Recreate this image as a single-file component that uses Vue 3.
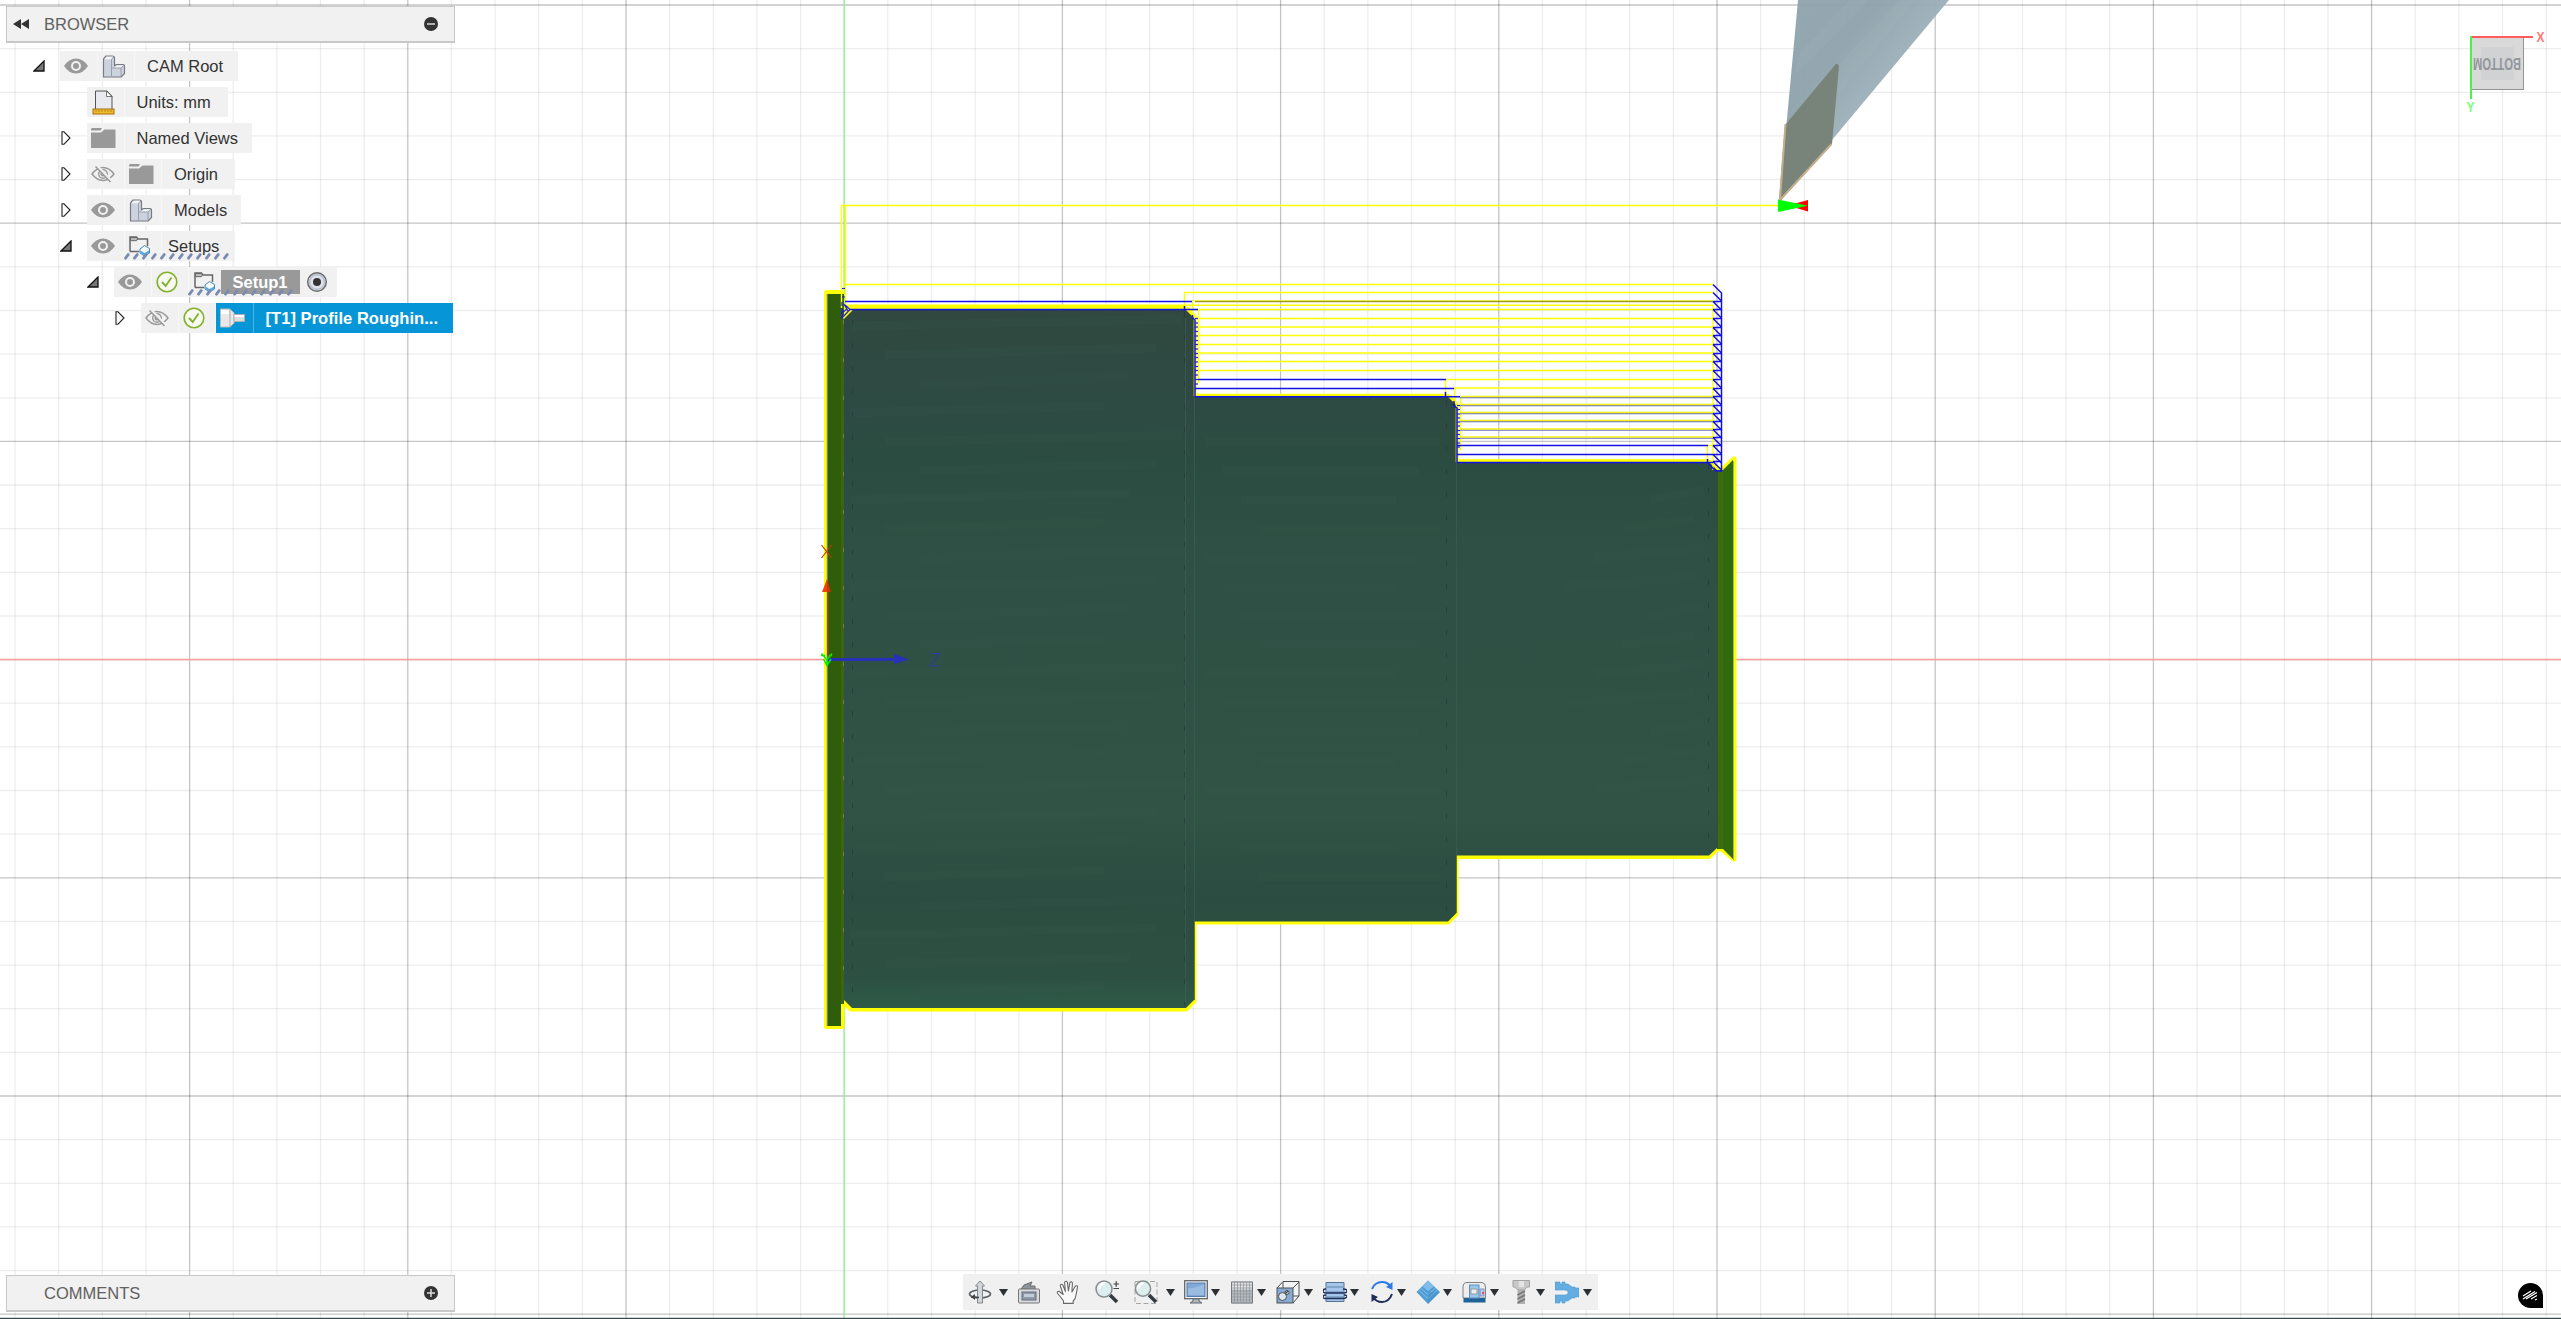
<script setup>
const ORIGIN = { x: 844.2, y: 659.6 }
const STEP = 43.64

const lines = (origin, limit) => {
  const out = []
  for (let k = -40; k <= 45; k++) {
    const pos = Math.round((origin + k * STEP) * 10) / 10
    if (pos > 0 && pos < limit) out.push({ pos, major: k % 5 === 0 })
  }
  return out
}
const verticals = lines(ORIGIN.x, 2561)
const horizontals = lines(ORIGIN.y, 1319)

// roughing passes above each diameter
const passes = [318.5, 327, 335.5, 344.5, 353, 361.5, 370.5]
const finePasses = [397, 405, 413, 421, 429.5, 437.5]
const teeth = [292.5, 301.5, 309.5, 318.5, 327.5, 335.5, 344.5, 353.5, 361.5, 370.5, 379.5, 388.5, 396.5, 405.5, 413.5, 421.5, 429.5, 437.5, 445.5, 454.5, 461.5]
const range = (start, end, step) => {
  const out = []
  for (let v = start; v <= end; v += step) out.push(Math.round(v * 2) / 2)
  return out
}
const ticksA = range(318.5, 384, 4.35)
const ticksB = range(405.5, 450, 4.15)
const streaks = range(326, 1000, 29)

const rows = [
  { indent: 60, arrow: 'open', cells: ['eye', 'body'], label: 'CAM Root', text: 12, width: 178 },
  { indent: 87, arrow: '', cells: ['units'], label: 'Units: mm', text: 12, width: 141 },
  { indent: 87, arrow: 'closed', cells: ['folder'], label: 'Named Views', text: 12, width: 165 },
  { indent: 87, arrow: 'closed', cells: ['hidden', 'folder'], label: 'Origin', text: 12, width: 148 },
  { indent: 87, arrow: 'closed', cells: ['eye', 'body'], label: 'Models', text: 12, width: 154 },
  { indent: 87, arrow: 'open', cells: ['eye', 'setup'], label: 'Setups', text: 6, width: 148, hatch: 37 },
  { indent: 114, arrow: 'open', cells: ['eye', 'check', 'setup'], label: 'Setup1', text: 0, width: 223, hatch: 74, kind: 'active' },
  { indent: 141, arrow: 'closed', cells: ['hidden', 'check', 'turning'], label: '[T1] Profile Roughin', text: 12, width: 312, kind: 'selected' },
]

// gap = space before the icon, caretGap = space between icon and caret
const tools = [
  { icon: 'orbit', gap: 5, caretGap: 7 },
  { icon: 'look', gap: 9 },
  { icon: 'hand', gap: 15 },
  { icon: 'zoom', gap: 15 },
  { icon: 'window', gap: 15, caretGap: 8 },
  { icon: 'display', gap: 9, caretGap: 3 },
  { icon: 'grid', gap: 10, caretGap: 3 },
  { icon: 'views', gap: 10, caretGap: 4 },
  { icon: 'section', gap: 10, caretGap: 3 },
  { icon: 'refresh', gap: 11, caretGap: 3 },
  { icon: 'stock', gap: 10, caretGap: 3 },
  { icon: 'machine', gap: 10, caretGap: 4 },
  { icon: 'tool', gap: 10, caretGap: 3 },
  { icon: 'fixture', gap: 10, caretGap: 4 },
]
</script>

<template>
  <div class="app">
    <svg class="viewport" width="2561" height="1319" viewBox="0 0 2561 1319">
      <defs>
        <linearGradient id="steel" gradientUnits="userSpaceOnUse" x1="0" y1="309" x2="0" y2="1009">
          <stop offset="0" stop-color="#30483f" />
          <stop offset="0.1" stop-color="#2e4a43" />
          <stop offset="0.22" stop-color="#2b4c41" />
          <stop offset="0.35" stop-color="#2f5044" />
          <stop offset="0.72" stop-color="#305346" />
          <stop offset="0.84" stop-color="#2b4d41" />
          <stop offset="0.95" stop-color="#2c5042" />
          <stop offset="1" stop-color="#2e5a47" />
        </linearGradient>
        <linearGradient id="holder" x1="0" y1="0" x2="1" y2="1">
          <stop offset="0" stop-color="#90a5b0" />
          <stop offset="0.3" stop-color="#8fa3ac" />
          <stop offset="0.5" stop-color="#9db0b9" />
          <stop offset="1" stop-color="#93a8b1" />
        </linearGradient>
      </defs>

      <rect width="2561" height="1319" fill="#fff" />
      <g class="grid">
        <line v-for="l in verticals" :key="'v' + l.pos" :x1="l.pos" :x2="l.pos" y1="0" y2="1319" :class="{ major: l.major }" />
        <line v-for="l in horizontals" :key="'h' + l.pos" :y1="l.pos" :y2="l.pos" x1="0" x2="2561" :class="{ major: l.major }" />
      </g>
      <line x1="0" x2="2561" y1="659.5" y2="659.5" stroke="#ff9c9c" stroke-width="1.3" />
      <line x1="844.3" x2="844.3" y1="0" y2="1319" stroke="#98f898" stroke-width="1.3" />

      <!-- turned part -->
      <path d="M826.5 292.5H841V309H1187L1194 317V397H1449L1456 405V462H1709L1717 470H1722L1734 459V859L1722 849H1717L1709 856.5H1456V914L1448 922H1194V1001L1186 1009H851L842 1001V1026.5H826.5Z" fill="#ff0" stroke="#ff0" stroke-width="5" stroke-linejoin="round" />
      <rect x="827" y="294" width="14" height="732" fill="#2f5d0a" />
      <rect x="841" y="294" width="3" height="710" fill="#3d6415" />
      <line x1="827" x2="827" y1="294" y2="1026" stroke="#b3b886" />
      <path d="M844 317L852 309H1187L1194.5 317V397H1449L1456.5 405V462H1709L1717 470V848L1709 855.5H1456V913.5L1448 921.5H1194V1000L1186 1008H852L844 1000Z" fill="url(#steel)" />
      <g stroke="#3a5c4f" stroke-width="9" opacity=".16">
        <path v-for="(y, i) in streaks" :key="y" :d="`M${850 + (i % 3) * 35} ${y}L${1182 - (i % 4) * 26} ${y - 7}`" />
        <path v-for="(y, i) in streaks.slice(4, 20)" :key="'m' + y" :d="`M${1205 + (i % 4) * 18} ${y}H${1440 - (i % 3) * 22}`" />
        <path v-for="(y, i) in streaks.slice(6, 17)" :key="'r' + y" :d="`M${1650 - (i % 4) * 28} ${y}L${1704 - (i % 2) * 10} ${y - 10}`" />
      </g>
      <path d="M1717 470H1723V849H1717Z" fill="#3e6b0d" />
      <path d="M1723 470L1733 460V859L1723 849Z" fill="#2f6a0c" />
      <line x1="1717.5" x2="1717.5" y1="472" y2="848" stroke="#344f2b" />
      <line x1="1733.5" x2="1733.5" y1="461" y2="860" stroke="#a8b35b" />
      <g fill="none" stroke="#3e5a53">
        <path d="M1185.5 318V1002M1194.5 318V1000M1456.5 406V913" opacity=".8" />
        <path d="M1184.5 312V1006M1446.5 400V918M1708.5 465V854M852.5 320V1000" stroke="#2b3540" stroke-dasharray="5 18" opacity=".7" />
        <path d="M843.5 320V1000" stroke="#6b7b42" stroke-dasharray="4 34" />
      </g>

      <!-- linking moves and cutting passes -->
      <g fill="none" stroke="#ff0" stroke-width="1.4">
        <path d="M841.5 308V205.5H1780M845.5 205.5V308M845 284.5H1713M1184.5 308V292.5H1713M1192.5 311V301M845 305.3H1713V470M1192 309.5H1713M1198.5 309V383M1445.5 396V379.5H1713M1454.5 403V388H1713M1460.5 397V450M1707.5 461V445.5H1713" />
        <path v-for="y in passes" :key="y" :d="`M1198 ${y}H1713`" />
      </g>
      <g fill="none" stroke="#ff0" stroke-width="2.6">
        <path d="M845 307.4H1185L1195 317V395H1448L1457 404V460.6H1708" />
        <path d="M843 318L852 309" />
      </g>
      <path d="M1195 301.5H1713" stroke="#a0a00c" stroke-width="1.6" />
      <path d="M1192 300.5H1713" stroke="#e8e820" stroke-width=".7" />
      <g v-for="y in finePasses" :key="'f' + y" fill="none">
        <path :d="`M1460 ${y + 0.6}H1713`" stroke="#6e6ec4" stroke-width="1.2" />
        <path :d="`M1460 ${y - 0.5}H1713`" stroke="#f3f315" stroke-width="1.3" />
      </g>
      <g fill="none" stroke="#1212e6" stroke-width="1.5">
        <path d="M845 301.5H1192M850 309.5H1198M1198 379.5H1446M1195 388.4H1454M1195 396.7H1460M1457 445.6H1708M1457 454.4H1713M1457 462.5H1713" />
        <path d="M1184.5 306V311M1192.5 315V318L1195 320V397M1445.5 392V397M1454 401V406L1457 408V462M1707.5 459V463L1716 471H1721.5V293L1713 284.5" />
        <path v-for="y in teeth" :key="'t' + y" :d="`M1713 ${y}L1721.5 ${y + 8.5}${y > 295 ? `M1713 ${y}H1721.5` : ''}`" />
      </g>
      <g fill="none" stroke="#1818ee" stroke-width="1.2">
        <path v-for="y in ticksA" :key="'a' + y" :d="`M1195 ${y}H1198`" />
        <path v-for="y in ticksB" :key="'b' + y" :d="`M1457 ${y}H1460`" />
        <path d="M842 288.5H845M842 297H845M842 302V306M842 308V318L850 309.5L845 305M842 313L847 309M844 304L848 311" />
      </g>

      <!-- work coordinate triad -->
      <path d="M828 592V656" stroke="#8a4a08" stroke-width="1.6" />
      <path d="M822 592L827 579V592Z" fill="#f4420a" />
      <path d="M827 579L831 592H827Z" fill="#c43a05" />
      <path d="M821.5 545L831.5 558M831.5 545L821.5 558" stroke="#c83a08" stroke-width="1.2" />
      <path d="M827 658H894V654L909 659.5L894 664V661H827Z" fill="#2830b8" />
      <path d="M930 653.5H939.5L930 666H940" fill="none" stroke="#2a3e9c" stroke-width="1.2" />
      <path d="M821.5 653.5L827 660L832 653.5M827 659V665M821 655.5H825M829 655.5H832M823.5 659L827 665.5L831 659" fill="none" stroke="#08ea08" stroke-width="1.5" />

      <!-- lathe tool -->
      <path d="M1798 0H1949L1832 140L1781 200H1779.5Z" fill="url(#holder)" fill-opacity=".96" />
      <path d="M1798 55L1850 0H1869L1795 75ZM1838 66L1900 0H1915L1838 95Z" fill="#a6b6bb" opacity=".18" />
      <path d="M1785 125L1835 65Q1837 62 1839 66L1832 144L1781 200H1779Z" fill="#78847a" />
      <path d="M1785.5 124L1780 200L1831.5 144" fill="none" stroke="#c4ad8a" stroke-width="2" />
      <path d="M1808 200V211.5L1788 205.5Z" fill="#f00" />
      <path d="M1778 199.5V212L1808 205.8Z" fill="#0f0" />

      <!-- view cube -->
      <rect x="2471.5" y="37.5" width="52" height="52" fill="#d9d9d9" stroke="#929292" />
      <rect x="2481" y="47" width="33" height="33" fill="#d0d2d4" />
      <text class="cube" x="-2521" y="-57.5" textLength="48" lengthAdjust="spacingAndGlyphs" transform="rotate(180)">BOTTOM</text>
      <path d="M2471 37H2533" stroke="#ff5c5c" stroke-width="2" />
      <path d="M2471 36V99" stroke="#4cf24c" stroke-width="2" />
      <text class="axis" x="2536.5" y="42" textLength="8" lengthAdjust="spacingAndGlyphs" fill="#ff7878">X</text>
      <text class="axis" x="2466.5" y="112" textLength="8" lengthAdjust="spacingAndGlyphs" fill="#78ff78">Y</text>

      <rect x="0" y="1317.8" width="2561" height="1.2" fill="#33474c" />
    </svg>

    <div class="overlay">
      <section class="browser">
        <header class="bar">
          <svg class="rewind" width="17" height="12" viewBox="0 0 17 12"><path d="M8 1V11L0 6ZM16 1V11L8 6Z" fill="#333" /></svg>
          <span class="title">BROWSER</span>
          <svg width="14" height="14" viewBox="0 0 14 14"><circle cx="7" cy="7" r="7" fill="#333" /><path d="M3 7H11" stroke="#ddd" stroke-width="1.5" /></svg>
        </header>

        <ul class="tree">
          <li v-for="row in rows" :key="row.label" class="row">
            <span class="lead" :style="{ width: row.indent + 'px' }">
              <svg v-if="row.arrow === 'open'" class="arrow" width="12" height="12" viewBox="0 0 12 12"><path d="M11 1V11H1Z" fill="#777" stroke="#111" stroke-width="1.3" /></svg>
              <svg v-else-if="row.arrow" class="arrow closed" width="10" height="14" viewBox="0 0 10 14"><path d="M1 .8H3L9 7L3 13.2H1Z" fill="#fff" stroke="#222" stroke-width="1.1" /></svg>
            </span>
            <div class="node" :class="row.kind" :style="{ width: row.width + 'px' }">
              <span v-for="cell in row.cells" :key="cell" class="cell" :class="cell">
                <svg v-if="cell === 'eye'" width="24" height="16" viewBox="0 0 24 16"><path d="M0 8Q5 .5 12 .5T24 8Q19 15.5 12 15.5T0 8Z" fill="#999" /><circle cx="12" cy="8" r="4" fill="#999" stroke="#f1f1f1" stroke-width="2" /></svg>
                <svg v-else-if="cell === 'hidden'" width="24" height="18" viewBox="0 0 24 18" fill="none" stroke="#999" stroke-width="1.4"><path d="M1 9Q6 2.5 12 2.5T23 9Q18 15.5 12 15.5T1 9Z" /><circle cx="12" cy="9" r="4.3" /><circle cx="12" cy="9" r="1.8" /><path d="M6 .5L21.5 17" stroke="#f1f1f1" stroke-width="2.4" /><path d="M4.5 1.5L19.5 17" /></svg>
                <svg v-else-if="cell === 'body'" width="24" height="23" viewBox="0 0 24 23"><path d="M1.5 4L4 1H10.5Q12.5 1 12.5 3V11L14.5 9.5H21Q22.5 9.5 22.5 11V18.5L19 22H1.5Z" fill="#cdd3de" stroke="#777b82" stroke-width="1.2" stroke-linejoin="round" /><path d="M2.2 4.3L4.5 1.8H11L9.2 4.3ZM11.5 12.8L14.5 10.6H21.2L19 12.8Z" fill="#f3f5f8" /><path d="M9.5 4.5V21M9.5 4.5L12 1.8M10 13H19V21M19 13L22 10.3" fill="none" stroke="#8d939e" stroke-width=".8" /></svg>
                <svg v-else-if="cell === 'units'" width="23" height="25" viewBox="0 0 23 25"><path d="M3.5 1H15L20 6V20H3.5Z" fill="#e8eaf0" stroke="#555" /><path d="M14.5 1V6.5H20Z" fill="#fff" stroke="#555" stroke-width=".8" /><rect x="1" y="19" width="21" height="5" fill="#eebb2b" stroke="#a86c10" /><path d="M4 20V22M7 20V22M10 20V22M13 20V22M16 20V22M19 20V22" stroke="#8a6518" stroke-width=".6" /></svg>
                <svg v-else-if="cell === 'folder'" width="25" height="20" viewBox="0 0 25 20"><path d="M0 4.5H10L13.5 1.5H24.5V20H0Z" fill="#999" /><path d="M1 0H11L9.5 2.6H0V1Z" fill="#999" /></svg>
                <svg v-else-if="cell === 'setup'" width="22" height="20" viewBox="0 0 22 20"><path d="M1 15.5V1H7.5L9 3H18.5V10M1 15.5H10" fill="#f1f1f1" stroke="#666" stroke-width="1.5" /><path d="M1.5 1.5H7.5L8.5 3L7.5 4.7H1.5Z" fill="#bbb" stroke="#666" /><path d="M11 13L15.5 9.5L20.5 12.5V17L15.5 20L11 17Z" fill="#f7fbff" stroke="#4285b7" /><path d="M11.5 14.5L15.5 17L20 14.5V17L15.5 19.5L11.5 17Z" fill="#54a9de" /></svg>
                <svg v-else-if="cell === 'check'" width="22" height="22" viewBox="0 0 22 22" fill="none"><circle cx="11" cy="11" r="9.8" fill="#f7faf1" stroke="#85b12f" stroke-width="1.6" /><path d="M6 11L9.7 15L15.5 6.5" stroke="#85b12f" stroke-width="1.9" /></svg>
                <svg v-else width="26" height="20" viewBox="0 0 26 20"><path d="M.5 1H10L14 5V15L10 19H.5Z" fill="#e8e8e8" stroke="#bcbcbc" /><path d="M10 1V19" stroke="#aaa" /><path d="M14 6.5H24.5V13.5H14Z" fill="#dedede" stroke="#b0b0b0" /><path d="M1 2H9V6H1ZM14.5 7H24V9H14.5Z" fill="#fff" /></svg>
              </span>
              <span class="label" :style="{ marginLeft: row.text + 'px' }">{{ row.label }}<i v-if="row.kind === 'selected'">...</i></span>
              <svg v-if="row.kind === 'active'" class="radio" width="22" height="22" viewBox="0 0 22 22"><circle cx="11" cy="11" r="9.3" fill="#dfe2eb" stroke="#6b6b6b" stroke-width="1.5" /><circle cx="11" cy="11" r="7.3" fill="none" stroke="#b8bfd0" stroke-width="1.4" /><circle cx="11" cy="11" r="4" fill="#333" /></svg>
              <svg v-if="row.hatch" class="hatch" width="106" height="7" viewBox="0 0 106 7" :style="{ left: row.hatch + 'px' }"><path v-for="n in 12" :key="n" :d="`M${(n - 1) * 9 + 1.5} 5.2L${(n - 1) * 9 + 4.2} 1.6`" stroke="#7b8bb0" stroke-width="2.8" stroke-linecap="round" /></svg>
            </div>
          </li>
        </ul>
      </section>

      <footer class="bottom">
        <div class="bar comments">
          <span class="title">COMMENTS</span>
          <svg width="14" height="14" viewBox="0 0 14 14"><circle cx="7" cy="7" r="7" fill="#333" /><path d="M3 7H11M7 3V11" stroke="#ddd" stroke-width="1.5" /></svg>
        </div>

        <nav class="toolbar">
          <template v-for="t in tools" :key="t.icon">
            <svg class="tool" width="24" height="24" viewBox="0 0 24 24" :style="{ marginLeft: t.gap + 'px' }">
              <g v-if="t.icon === 'orbit'" stroke="#5a6068"><ellipse cx="12" cy="14" rx="10.5" ry="4" fill="none" stroke-width="1.6" /><path d="M9.5 23V6H7.5L12 1L16.5 6H14.5V23Z" fill="#d3d7dc" stroke="#82878d" stroke-width="1" /><path d="M3 17L11 17.5" stroke="#444" stroke-width="1.5" /><path d="M7 14L3 17L7 20Z" fill="#444" stroke="none" /></g>
              <g v-else-if="t.icon === 'look'"><path d="M4 9L7 5L15 2L13 6H18V9.5Z" fill="#8d949b" stroke="#666b70" /><rect x="1.5" y="9" width="21" height="14" rx="1" fill="#d8dbde" stroke="#777" /><rect x="5" y="12" width="14" height="8" fill="#8f99a8" stroke="#656c76" /><path d="M7 14H17V17H7Z" fill="#c4ccd7" /></g>
              <path v-else-if="t.icon === 'hand'" d="M7.5 23.4V21L5 17.5L1.3 13Q1 11 3 11.3L7.2 14.5L4.2 5.5Q5 3.4 6.8 5L9.4 11.5L8.6 2.3Q10 .3 11.4 2.3L12.4 11L13.9 2.3Q15.5 .8 16.4 3L15.9 12L19.4 6Q21.6 5 21.5 7.2L20 15Q19.5 19 17.2 21V23.4Z" fill="#fafafa" stroke="#686868" stroke-width="1.1" stroke-linejoin="round" />
              <g v-else-if="t.icon === 'zoom'"><path d="M15 15L22 22" stroke="#333b40" stroke-width="3.6" /><circle cx="9" cy="9" r="8" fill="#dceeed" stroke="#868e90" stroke-width="1.5" /><path d="M4 9Q5 4 10 3" fill="none" stroke="#fff" stroke-width="2.4" /><path d="M18.5 4H24M21.2 1.2V6.8M18.5 8.5H24" stroke="#444" stroke-width="1.2" /></g>
              <g v-else-if="t.icon === 'window'"><rect x="1" y="1.5" width="22" height="22" fill="none" stroke="#a6a6a6" stroke-dasharray="5 2.5" /><path d="M15 15L22 22" stroke="#333b40" stroke-width="3.6" /><circle cx="9" cy="8.7" r="7.6" fill="#dceeed" stroke="#868e90" stroke-width="1.5" /><path d="M4 8.5Q5 4 9.5 3" fill="none" stroke="#fff" stroke-width="2.4" /></g>
              <g v-else-if="t.icon === 'display'" stroke="#63676c"><path d="M9 18H15V21L18 23H6L9 21Z" fill="#aeb4b9" /><rect x=".7" y=".7" width="22.6" height="18" fill="#f5f5f5" stroke-width="1.3" /><rect x="3" y="3" width="18" height="13.5" fill="#82a9d5" stroke="#557da9" /><path d="M4 15V8Q10 9 20 4V15Z" fill="#99bce1" stroke="none" /></g>
              <g v-else-if="t.icon === 'grid'"><rect x="1" y="1.5" width="22" height="22" fill="#b8bcc1" /><rect x="1" y="1.5" width="22" height="8" fill="#e0e2e4" /><path d="M1.5 2H22.5V23H1.5Z" fill="none" stroke="#73797f" /><path d="M4.5 2V23M7.5 2V23M10.5 2V23M13.5 2V23M16.5 2V23M19.5 2V23M2 5H22M2 8H22M2 11H22M2 14H22M2 17H22M2 20H22" fill="none" stroke="#8b9298" stroke-width=".7" /></g>
              <g v-else-if="t.icon === 'views'" stroke="#4c5055"><path d="M1 8L7 1.5H23V16L17 23" fill="#f3f3f3" /><path d="M7 2V8M17 8L23 2M17 16H23" fill="none" /><rect x="1" y="8" width="16" height="15" fill="#86aad3" /><circle cx="6.5" cy="16.5" r="4" fill="#dce4ec" /><circle cx="11" cy="12.5" r="2" fill="#dce4ec" /><path d="M9 14L12 11" stroke-width="1.5" /></g>
              <g v-else-if="t.icon === 'section'"><path d="M3 2.5H21V21.5H3Z" fill="#a4c6ec" stroke="#59738f" /><path d="M4 7H20M4 12H20M4 17H20" stroke="#6384a7" /><path d="M3 9Q0 9 0 11T4 13H20Q24 13 24 11T20 9M3 15Q0 15 0 17T5 18.5H20Q24 18 24 16.5T21 15" fill="none" stroke="#202e5a" stroke-width="1.5" /></g>
              <g v-else-if="t.icon === 'refresh'" fill="none" stroke-width="2"><path d="M2 9Q5 2 12 2Q18 2 21 7" stroke="#2e7ae4" /><path d="M22.5 2V10L16 7Z" fill="#2e7ae4" stroke="none" /><path d="M22 14Q19 22 12 22Q6 22 3 17" stroke="#1e2d59" /><path d="M1.5 14V22L8 17Z" fill="#1e2d59" stroke="none" /></g>
              <g v-else-if="t.icon === 'stock'"><path d="M12 .5L24 12L12 24L.5 12Z" fill="#4f9ed5" /><path d="M12 .5L18 6.5L12 11L6.5 6.5Z" fill="#80bcea" /><path d="M5 8.5L12 14.5L19 8.5M3 10.5L12 18.5L21 10.5" fill="none" stroke="#81bce5" /><path d="M12 12L24 12L12 24Z" fill="#3d85bd" opacity=".3" /></g>
              <g v-else-if="t.icon === 'machine'"><path d="M1 18V7Q1 2.5 5 2.5H20Q23.5 3 23.5 7V18Z" fill="#eee" stroke="#808080" /><rect x="1.5" y="18" width="22" height="4.5" fill="#1f6298" /><rect x="7.5" y="5" width="9.5" height="13" fill="#9bc7ed" stroke="#5a91bd" /><rect x="9" y="9" width="6" height="5" fill="#eee" stroke="#999" /><rect x="18" y="9" width="4" height="7" fill="#b9cbea" stroke="#6486bf" stroke-width=".8" /><path d="M20 13H22" stroke="#f45" stroke-width="2" /></g>
              <g v-else-if="t.icon === 'tool'"><path d="M4 .5H20.5V7H18L16 9.5H8L6 7H4Z" fill="#c8c8c8" stroke="#a3a3a3" /><path d="M8.5 9H16V24H8.5Z" fill="#b0b0b0" /><path d="M8.5 15L16 11M8.5 19L16 15M8.5 23L16 19" stroke="#787878" stroke-width="1.5" /><path d="M10 1H15V7H10Z" fill="#e4e4e4" /></g>
              <path v-else d="M0 2H5V4H7V2H10V4H13L17 7H20V8H24V17H20V18H17L13 21H10V23H7V21H5V23H0V15H10Q13 15 13 12.5T10 10H0Z" fill="#63ade2" stroke="#4c9bd2" stroke-width=".6" />
            </svg>
            <svg v-if="t.caretGap" class="caret" width="9" height="7" viewBox="0 0 9 7" :style="{ marginLeft: t.caretGap + 'px' }"><path d="M0 0H9L4.5 7Z" fill="#2c3033" /></svg>
          </template>
        </nav>

        <svg class="brand" width="25" height="25" viewBox="0 0 25 25"><path d="M12.5 0A12.5 12.5 0 0 1 25 12.5V25H12.5A12.5 12.5 0 0 1 12.5 0Z" fill="#000" /><path d="M5 13L13 8M5 16L17 8.5M8 16L19 9.5M13 16L19 12.5M17 17L19 16" stroke="#fff" stroke-width="1.3" /></svg>
      </footer>
    </div>
  </div>
</template>

<style>
body { background: #fff; }
</style>

<style scoped>
.app { position: relative; width: 2561px; height: 1319px; overflow: hidden; font-family: "Liberation Sans", Arial, sans-serif; font-size: 16.5px; color: #333; }
.viewport { position: absolute; inset: 0; }
.grid line { stroke: #000; stroke-opacity: .07; stroke-width: 1.3; }
.grid .major { stroke-opacity: .23; }
.cube { font-family: "Liberation Sans", sans-serif; font-size: 16.5px; font-weight: bold; fill: #92969a; }
.axis { font-family: "Liberation Sans", sans-serif; font-size: 14.5px; font-weight: bold; }
.overlay { position: relative; height: 1319px; box-sizing: border-box; display: flex; flex-direction: column; justify-content: space-between; padding: 6px 18px 9px 6px; }
svg { flex: none; }
.bar { width: 449px; height: 37px; box-sizing: border-box; display: flex; align-items: center; border: 1px solid #c8c8c8; border-bottom-width: 2px; background: #f1f1f1; padding: 0 16px 0 6px; }
.title { flex: 1; margin-left: 14px; color: #606060; line-height: 34px; }
.comments .title { margin-left: 31px; }
.tree { list-style: none; margin: 8px 0 0 -6px; padding: 0; display: flex; flex-direction: column; gap: 6px; }
.row { display: flex; height: 30px; }
.lead { display: flex; align-items: center; justify-content: flex-end; flex: none; }
.arrow { margin-right: 15px; }
.arrow.closed { margin-right: 16px; }
.node { position: relative; display: flex; align-items: center; background: #f1f1f1; box-sizing: border-box; white-space: nowrap; }
.cell { width: 37.5px; height: 30px; box-sizing: border-box; padding-left: 4.5px; display: flex; align-items: center; border-right: 1px solid #f7f7f7; flex: none; }
.label { line-height: 30px; }
.node .eye { padding-left: 4px; }
.cell.folder { padding-left: 4px; }
.cell.hidden { padding-left: 4px; }
.active .setup { width: 31.5px; padding-left: 4.5px; border: 0; }
.active .label { width: 79px; height: 24px; line-height: 25px; background: #999; color: #fff; font-weight: bold; text-align: center; }
.radio { margin-left: 6px; }
.selected .label { color: #fff; font-weight: bold; letter-spacing: 0.05px; }
.selected i { font-style: normal; }
.selected { background: linear-gradient(90deg, #f1f1f1 75px, #0696d7 75px); }
.cell.turning { border-color: #4bb4e4; padding-left: 4px; }
.hatch { position: absolute; bottom: 1px; }
.bottom { display: flex; align-items: flex-end; }
.comments { margin-bottom: -2px; }
.toolbar { display: flex; align-items: center; width: 635px; height: 36px; margin-left: 508px; background: #f0f0f0; }
.caret { margin-top: 1px; }
.brand { margin: 0 0 2px auto; }
</style>
